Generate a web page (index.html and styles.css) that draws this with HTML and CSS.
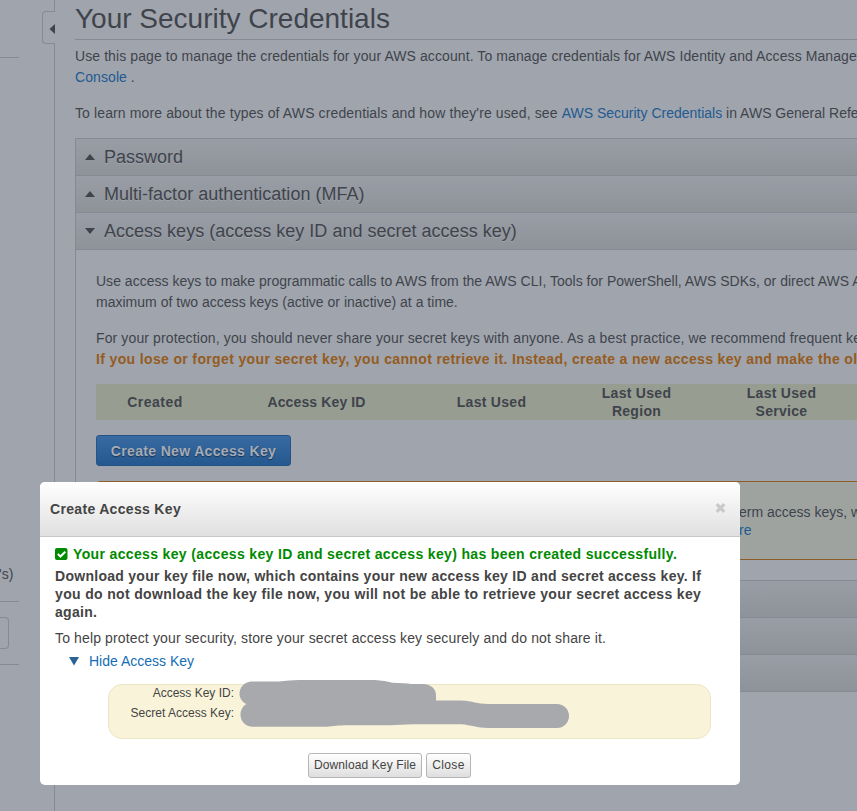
FILE: index.html
```html
<!DOCTYPE html>
<html lang="en">
<head>
<meta charset="utf-8">
<title>Your Security Credentials</title>
<link rel="stylesheet" href="styles.css">
</head>
<body>
<div class="page">
  <aside class="sidebar">
    <div class="side-top"></div>
    <div class="side-item">'s)</div>
    <div class="side-form"><div class="side-input"></div></div>
    <div class="collapse"><svg width="6" height="10" viewBox="0 0 6 10"><path d="M6 0v10L0.5 5z" fill="#3e444d"/></svg></div>
  </aside>
  <main class="main">
    <h1>Your Security Credentials</h1>
    <p class="intro"><span class="ls-a">Use this page to manage the credentials for your AWS account. To manage credentials for AWS Identity and Access Management</span><br><a class="ls-a">Console</a> .</p>
    <p class="intro"><span class="ls-b">To learn more about the types of AWS credentials and how they're used, see </span><a>AWS Security Credentials</a> in AWS General Reference.</p>
    <section class="accordion">
      <h2><svg class="caret" viewBox="0 0 10 6"><path d="M0 6h10L5 0z"/></svg>Password</h2>
      <h2><svg class="caret" viewBox="0 0 10 6"><path d="M0 6h10L5 0z"/></svg>Multi-factor authentication (MFA)</h2>
      <h2><svg class="caret" viewBox="0 0 10 6"><path d="M0 0h10L5 6z"/></svg>Access keys (access key ID and secret access key)</h2>
      <div class="panel">
        <p class="ls-e">Use access keys to make programmatic calls to AWS from the AWS CLI, Tools for PowerShell, AWS SDKs, or direct AWS API<br>maximum of two access keys (active or inactive) at a time.</p>
        <p><span class="ls-b">For your protection, you should never share your secret keys with anyone. As a best practice, we recommend frequent key</span><br><b class="warn-text">If you lose or forget your secret key, you cannot retrieve it. Instead, create a new access key and make the old</b></p>
        <div class="thead">
          <span class="wide">Created</span><span class="mid">Access Key ID</span><span>Last Used</span><span>Last Used<br>Region</span><span>Last Used<br>Service</span>
        </div>
        <div class="create">Create New Access Key</div>
        <div class="notice">
          <div>erm access keys, we</div>
          <div><a>re</a></div>
        </div>
      </div>
      <h2></h2>
      <h2></h2>
      <h2 class="last"></h2>
    </section>
  </main>
</div>
<div class="modal">
  <header class="modal-head">
    <span>Create Access Key</span>
    <svg width="11" height="10" viewBox="0 0 11 10"><path d="M1.7 1.2l7.600 7.600M9.300 1.200l-7.600 7.600" stroke="#c9c9c9" stroke-width="3.2"/></svg>
  </header>
  <div class="modal-body">
    <div class="success"><svg width="13" height="12" viewBox="0 0 13 12"><rect width="12.5" height="12" rx="2" fill="#008a00"/><path d="M2.8 5.9l2.6 2.6 4.9-4.8" fill="none" stroke="#fff" stroke-width="2"/></svg><span>Your access key (access key ID and secret access key) has been created successfully.</span></div>
    <div class="download"><span class="ls-c">Download your key file now, which contains your new access key ID and secret access key. If</span><br><span class="ls-d">you do not download the key file now, you will not be able to retrieve your secret access key</span><br><span class="ls-c">again.</span></div>
    <div class="help">To help protect your security, store your secret access key securely and do not share it.</div>
    <div class="toggle"><svg width="10" height="9" viewBox="0 0 10 9"><path d="M0 0h10L5 8.5z" fill="#2a6496"/></svg><a>Hide Access Key</a></div>
    <div class="keys">
      <div class="row">Access Key ID:</div>
      <div class="row">Secret Access Key:</div>
      <svg class="redaction" width="332" height="50" viewBox="0 0 332 50"><path d="M13 1.500H40Q50 0 60 0H136Q146 .6 153 2.700Q166 2.900 172 4H184C192 4 197 9 197 15V20.500H222C234 21 238 24 249 24H318A12 12 0 0 1 318 48H249C238 48 232 45 222 44.300H175Q160 44.500 152 45.300H106C96 45.600 94 46.800 84 46.800H14C6 46.800 1.500 41 1.500 34.500C1.500 30 4 26 7.500 24C3 22 .5 18 .5 13.500C.5 7 6 1.500 13 1.500Z" fill="#a8a9ad"/></svg>
    </div>
    <div class="actions"><span class="btn dl">Download Key File</span><span class="btn cl">Close</span></div>
  </div>
</div>
</body>
</html>
```
FILE: styles.css
```css
* { box-sizing: border-box; }
body {
  margin: 0;
  width: 857px;
  height: 811px;
  overflow: hidden;
  position: relative;
  background: #a0a4ac;
  color: #3f444c;
  font: 14px/21px "Liberation Sans", Arial, sans-serif;
}
a { color: #225a92; }
h1, h2, p { margin: 0; font-weight: 400; }
.page { display: flex; height: 811px; overflow: hidden; }
.ls-a { letter-spacing: .088px; }
.ls-b { letter-spacing: .12px; }
.ls-c { letter-spacing: .278px; }
.ls-d { letter-spacing: .345px; }
.ls-e { letter-spacing: .013px; }

.sidebar {
  position: relative;
  flex: none;
  width: 55px;
  border-right: 1px solid #868a92;
}
.side-top { width: 19px; height: 58px; border-bottom: 1px solid #868a92; }
.side-item {
  width: 19px;
  height: 544px;
  padding-top: 506px;
  border-bottom: 1px solid #868a92;
  text-indent: -1px;
}
.side-form {
  width: 19px;
  height: 63px;
  padding-top: 15px;
  border-bottom: 1px solid #868a92;
}
.side-input {
  width: 9px;
  height: 32px;
  border: 1px solid #868a92;
  border-left: 0;
  border-radius: 0 4px 4px 0;
}
.collapse {
  position: absolute;
  left: 42px;
  top: 11px;
  width: 13px;
  height: 33px;
  display: flex;
  align-items: center;
  padding: 3px 0 0 6px;
  border: 1px solid #868a92;
  border-right: 0;
  border-radius: 4px 0 0 4px;
  background: #a0a4ac;
}

.main { flex: 1; min-width: 0; padding-left: 20px; white-space: nowrap; }
h1 {
  height: 40px;
  padding-top: 2px;
  margin-bottom: 6px;
  border-bottom: 1px solid #868a92;
  font-size: 28px;
  line-height: 33px;
}
.intro { margin-bottom: 15px; }
.accordion { border-left: 1px solid #868a92; }
h2 {
  display: flex;
  align-items: center;
  height: 37px;
  padding-left: 9px;
  border-top: 1px solid #868a92;
  background: linear-gradient(#999da5, #8e9299);
  font-size: 18px;
  line-height: 36px;
  letter-spacing: .012px;
  text-shadow: 0 1px 0 #a0a4ac;
}
h2.last { height: 38px; border-bottom: 1px solid #868a92; }
.intro + .accordion { margin-top: -1px; }
.caret { width: 10px; height: 6px; margin-right: 9px; fill: #3e444d; }
.panel { height: 331px; padding: 21px 0 0 20px; border-top: 1px solid #868a92; }
.panel p { margin-bottom: 15px; }
.warn-text { color: #945c22; letter-spacing: .357px; }
.thead {
  display: flex;
  align-items: center;
  width: 790px;
  height: 36px;
  margin-top: -1px;
  background: #979d91;
  font-weight: 700;
  line-height: 18px;
  letter-spacing: .3px;
  text-align: center;
}
.thead span { width: 145px; flex: none; }
.thead .wide { width: 118px; letter-spacing: .5px; }
.thead .mid { width: 205px; letter-spacing: .13px; }
.create {
  width: 195px;
  height: 31px;
  margin: 15px 0;
  border: 1px solid #255487;
  border-radius: 3px;
  background: linear-gradient(#396ba2, #24588e);
  color: #a5acb6;
  font-weight: 700;
  line-height: 31px;
  letter-spacing: .34px;
  text-align: center;
  text-shadow: 0 1px 1px #1c3352;
}
.notice {
  width: 790px;
  height: 79px;
  padding: 21px 0 0 642px;
  border: 1px solid #8e5c26;
  border-radius: 4px;
  background: #9ea3a0;
  line-height: 18px;
}

.modal {
  position: absolute;
  left: 40px;
  top: 482px;
  width: 700px;
  height: 303px;
  border-radius: 5px;
  background: #fff;
  color: #444;
  white-space: nowrap;
}
.modal a { color: #146eb4; }
.modal-head {
  display: flex;
  align-items: center;
  justify-content: space-between;
  height: 55px;
  padding: 0 14px 0 10px;
  border-bottom: 1px solid #c8c8c8;
  border-radius: 5px 5px 0 0;
  background: linear-gradient(#fff, #e0e0e0);
  font-weight: 700;
  letter-spacing: .32px;
}
.modal-head svg { margin-bottom: 3px; }
.modal-body { padding: 8px 29px 0 15px; line-height: 18px; }
.success {
  display: flex;
  align-items: center;
  gap: 5px;
  color: #008a00;
  font-weight: 700;
  letter-spacing: .352px;
}
.download { margin-top: 4px; font-weight: 700; }
.help { margin-top: 8px; letter-spacing: .136px; }
.toggle { display: flex; align-items: center; gap: 10px; margin: 5px 0 0 14px; }
.keys {
  position: relative;
  height: 55px;
  margin: 14px 0 0 53px;
  border: 1px solid #ebe6c4;
  border-radius: 14px;
  background: #f9f4d9;
  font-size: 12px;
}
.row { width: 125px; height: 20px; line-height: 17px; text-align: right; }
.redaction { position: absolute; left: 129.5px; top: -5px; }
.actions {
  display: flex;
  gap: 4px;
  margin: 14px 0 0 253px;
  font-size: 12px;
}
.btn {
  height: 25px;
  border: 1px solid #b5b5b5;
  border-radius: 3px;
  background: linear-gradient(#fff, #dedede);
  line-height: 22px;
  text-align: center;
}
.dl { width: 114px; letter-spacing: .115px; }
.cl { width: 45px; letter-spacing: .4px; }
```
